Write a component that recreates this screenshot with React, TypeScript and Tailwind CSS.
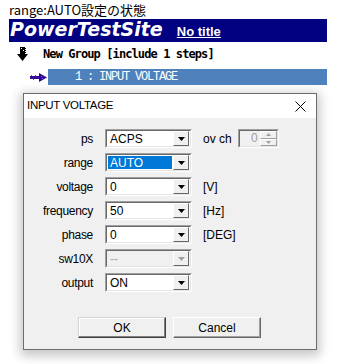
import React from "react";

function DropButton({ disabled }: { disabled?: boolean }) {
  return (
    <div className="w-[16px] h-[15px] my-auto mr-[1px] bg-[#f0f0f0] border border-t-white border-l-white border-b-[#696969] border-r-[#696969] flex items-center justify-center">
      <svg width="7" height="4" viewBox="0 0 7 4">
        <polygon points="0,0 7,0 3.5,4" fill={disabled ? "#a0a0a0" : "#000"} />
      </svg>
    </div>
  );
}

function Combo({
  value,
  selected,
  disabled,
}: {
  value: string;
  selected?: boolean;
  disabled?: boolean;
}) {
  return (
    <div className="w-[87px] h-[19px] border border-t-[#a0a0a0] border-l-[#a0a0a0] border-b-white border-r-white">
      <div
        className={`h-full flex border border-t-[#696969] border-l-[#696969] border-b-[#e3e3e3] border-r-[#e3e3e3] ${
          disabled ? "bg-[#f0f0f0]" : "bg-white"
        }`}
      >
        <div className="flex-1 flex items-center p-[1px]">
          <span
            className={`h-full w-full flex items-center pl-[2px] text-[12px] ${
              selected ? "bg-[#0078d7] text-white" : disabled ? "text-[#a0a0a0]" : "text-black"
            }`}
          >
            {value}
          </span>
        </div>
        <DropButton disabled={disabled} />
      </div>
    </div>
  );
}

function Row({
  label,
  value,
  unit,
  selected,
  disabled,
  children,
}: {
  label: string;
  value: string;
  unit?: string;
  selected?: boolean;
  disabled?: boolean;
  children?: React.ReactNode;
}) {
  return (
    <div className="flex items-center h-[19px]">
      <div className="w-[69px] text-right text-[12px] tracking-[-0.3px]">{label}</div>
      <div className="ml-[12px]">
        <Combo value={value} selected={selected} disabled={disabled} />
      </div>
      {unit && <div className="ml-[11px] text-[12px]">{unit}</div>}
      {children}
    </div>
  );
}

function Spinner() {
  return (
    <div className="ml-[6px] w-[41px] h-[19px] border border-t-[#a0a0a0] border-l-[#a0a0a0] border-b-white border-r-white">
      <div className="h-full flex bg-[#f0f0f0] border border-t-[#696969] border-l-[#696969] border-b-[#e3e3e3] border-r-[#e3e3e3]">
        <div className="flex-1 text-right pr-[2px] text-[12px] leading-[15px] text-[#a0a0a0]">0</div>
        <div className="w-[17px] flex flex-col">
          <div className="h-[8px] flex items-center justify-center border border-t-white border-l-white border-b-[#a0a0a0] border-r-[#a0a0a0]">
            <svg width="5" height="3" viewBox="0 0 5 3">
              <polygon points="2.5,0 5,3 0,3" fill="#a0a0a0" />
            </svg>
          </div>
          <div className="h-[8px] flex items-center justify-center border border-t-white border-l-white border-b-[#a0a0a0] border-r-[#a0a0a0]">
            <svg width="5" height="3" viewBox="0 0 5 3">
              <polygon points="0,0 5,0 2.5,3" fill="#a0a0a0" />
            </svg>
          </div>
        </div>
      </div>
    </div>
  );
}

function Button({ label, isDefault }: { label: string; isDefault?: boolean }) {
  return (
    <div
      className={`w-[88px] h-[21px] bg-[#f0f0f0] flex items-center justify-center text-[12px] border ${
        isDefault
          ? "border-t-[#d4d4d4] border-l-[#d4d4d4] border-b-[#404040] border-r-[#404040] shadow-[inset_-1px_-1px_0_#808080,inset_1px_1px_0_#fff]"
          : "border-t-white border-l-white border-b-[#696969] border-r-[#696969] shadow-[inset_-1px_-1px_0_#a0a0a0]"
      }`}
    >
      {label}
    </div>
  );
}

export default function App() {
  return (
    <div className="w-[345px] h-[364px] bg-white overflow-hidden font-['Liberation_Sans',sans-serif] text-black">
      <div className="pl-[9px] pt-[1px] text-[13px] leading-[18px] font-['Noto_Sans_CJK_JP',sans-serif]">
        range:AUTO設定の状態
      </div>

      <div className="ml-[9px] w-[318px] h-[23px] bg-[#000080] flex items-end pb-[2px]">
        <span className="pl-[1px] font-['DejaVu_Sans',sans-serif] font-bold italic text-[19px] leading-[21px] text-white">
          PowerTestSite
        </span>
        <span className="ml-[14px] mb-[1px] text-[13px] leading-[15px] font-bold text-white underline">
          No title
        </span>
      </div>

      <div className="flex items-center h-[17px] mt-[3px] pl-[17px]">
        <svg width="11" height="14" viewBox="0 0 11 14">
          <rect x="3" y="0" width="5" height="7" fill="#000" />
          <rect x="8" y="1" width="1" height="1" fill="#000" />
          <rect x="8" y="3" width="1" height="1" fill="#000" />
          <rect x="8" y="5" width="1" height="1" fill="#000" />
          <rect x="4" y="1" width="1" height="1" fill="#fff" />
          <rect x="6" y="3" width="1" height="1" fill="#fff" />
          <polygon points="0,7 11,7 5.5,14" fill="#000" />
        </svg>
        <span className="ml-[15px] text-[12px] font-bold font-['DejaVu_Sans_Mono',monospace] tracking-[-0.9px]">
          New Group [include 1 steps]
        </span>
      </div>

      <div className="flex items-center mt-[7px] h-[16px]">
        <svg className="ml-[30px]" width="17" height="9" viewBox="0 0 17 9">
          <rect x="0" y="3" width="10" height="3" fill="#3a0a9a" />
          <rect x="1" y="2" width="1" height="1" fill="#7b3fd0" />
          <rect x="3" y="6" width="1" height="1" fill="#7b3fd0" />
          <rect x="5" y="2" width="1" height="1" fill="#7b3fd0" />
          <polygon points="9,0 17,4.5 9,9" fill="#2a0890" />
          <rect x="11" y="3" width="1" height="1" fill="#8a4fe0" />
          <rect x="12" y="5" width="1" height="1" fill="#8a4fe0" />
        </svg>
        <div className="ml-[1px] w-[279px] h-[16px] bg-[#4f81bd] flex items-center pl-[27px] text-white text-[12px] tracking-[-1.2px] font-['Liberation_Mono',monospace]">
          1 : INPUT VOLTAGE
        </div>
      </div>

      <div className="ml-[23px] mt-[8px] w-[294px] h-[257px] border border-[#6d6d6d] bg-[#f0f0f0] shadow-[0_3px_10px_3px_rgba(0,0,0,0.22)] flex flex-col">
        <div className="h-[24px] bg-white flex items-center justify-between pl-[3px] pr-[10px]">
          <span className="text-[11.5px] tracking-[-0.3px]">INPUT VOLTAGE</span>
          <svg width="11" height="11" viewBox="0 0 11 11">
            <path d="M0.5 0.5 L10.5 10.5 M10.5 0.5 L0.5 10.5" stroke="#000" strokeWidth="1" />
          </svg>
        </div>
        <div className="flex-1 pt-[11px] flex flex-col gap-[5px]">
          <Row label="ps" value="ACPS">
            <span className="ml-[11px] text-[12px]">ov ch</span>
            <Spinner />
          </Row>
          <Row label="range" value="AUTO" selected />
          <Row label="voltage" value="0" unit="[V]" />
          <Row label="frequency" value="50" unit="[Hz]" />
          <Row label="phase" value="0" unit="[DEG]" />
          <Row label="sw10X" value="--" disabled />
          <Row label="output" value="ON" />
          <div className="flex gap-[7px] pl-[54px] mt-[20px]">
            <Button label="OK" isDefault />
            <Button label="Cancel" />
          </div>
        </div>
      </div>
    </div>
  );
}
